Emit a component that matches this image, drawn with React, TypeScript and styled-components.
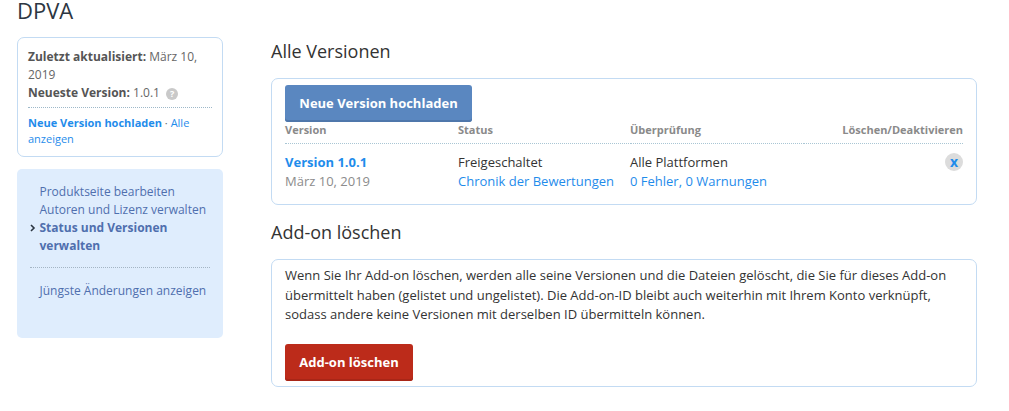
import React from "react";
import styled, { createGlobalStyle } from "styled-components";

const Global = createGlobalStyle`
  html, body { margin: 0; padding: 0; background: #fff; }
  body { font-family: "Open Sans", "Liberation Sans", sans-serif; font-size: 13px; line-height: 18px; color: #333; }
  a { text-decoration: none; color: #1f8ceb; }
`;
const Page = styled.div`
  padding: 0 17px;
  width: 960px;
  box-sizing: content-box;
`;
const Title = styled.h1`
  margin: 0;
  height: 37px;
  font-size: 22px;
  line-height: 21px;
  font-weight: 400;
  color: #2c3642;
`;
const Columns = styled.div`
  display: flex;
  gap: 48px;
  align-items: flex-start;
`;
const Side = styled.aside`
  width: 206px;
  flex: none;
  display: flex;
  flex-direction: column;
  gap: 12px;
`;
const InfoCard = styled.div`
  box-sizing: border-box;
  height: 120px;
  border: 1px solid #c3dbf3;
  border-radius: 7px;
  padding: 10px 10px 0;
  font-size: 12px;
  color: #666;
`;
const Strong = styled.b`
  font-weight: 700;
  color: #555;
`;
const HelpDot = styled.span`
  display: inline-flex;
  align-items: center;
  justify-content: center;
  width: 12px;
  height: 12px;
  margin-left: 3px;
  border-radius: 50%;
  background: #c9c9c9;
  color: #fff;
  font-size: 9px;
  font-weight: 700;
  line-height: 12px;
  vertical-align: 0;
`;
const InfoLinks = styled.div`
  margin-top: 5px;
  padding-top: 7px;
  width: 184px;
  border-top: 1px dotted #9db8c9;
  font-size: 11px;
  line-height: 16px;
`;
const Nav = styled.nav`
  box-sizing: border-box;
  height: 169px;
  background: #dfedfd;
  border-radius: 5px;
  padding: 14px 13px 0 22.5px;
`;
const NavItem = styled.a<{ $active?: boolean }>`
  display: block;
  position: relative;
  font-size: 12px;
  line-height: 18px;
  color: #4f6fae;
  font-weight: ${(p) => (p.$active ? 700 : 400)};
`;
const Chevron = styled.svg`
  position: absolute;
  left: -10px;
  top: 5px;
`;
const NavRule = styled.div`
  margin: 12px 0 14px -10px;
  width: 180px;
  border-top: 1px dotted #a4b5c4;
`;
const Main = styled.main`
  width: 706px;
  flex: none;
`;
const Heading = styled.h2<{ $top: number }>`
  margin: ${(p) => p.$top}px 0 0;
  height: 39px;
  font-size: 18px;
  line-height: 25px;
  font-weight: 400;
  color: #333;
`;
const Card = styled.section<{ $h: number }>`
  box-sizing: border-box;
  height: ${(p) => p.$h}px;
  border: 1px solid #c3dbf3;
  border-radius: 7px;
  padding: 6px 13px 0;
`;
const Button = styled.a<{ $bg: string; $shade: string; $w: number }>`
  display: block;
  box-sizing: border-box;
  width: ${(p) => p.$w}px;
  height: 37px;
  background: ${(p) => p.$bg};
  box-shadow: inset 0 -2px 0 ${(p) => p.$shade};
  border-radius: 3px;
  color: #fff;
  font-size: 13px;
  font-weight: 700;
  line-height: 37px;
  text-align: center;
`;
const Grid = styled.div`
  display: grid;
  grid-template-columns: 173px 172px 173px 1fr;
`;
const Th = styled.div<{ $right?: boolean }>`
  height: 21px;
  margin-right: ${(p) => (p.$right ? 0 : 1)}px;
  border-bottom: 1px dotted #a9c6d4;
  font-size: 11px;
  font-weight: 700;
  line-height: 16px;
  color: #8a8a8a;
  text-align: ${(p) => (p.$right ? "right" : "left")};
`;
const Td = styled.div<{ $right?: boolean }>`
  padding-top: 9px;
  font-size: 13px;
  line-height: 19px;
  color: #333;
  display: flex;
  flex-direction: column;
  align-items: ${(p) => (p.$right ? "flex-end" : "flex-start")};
`;
const VersionLink = styled.a`
  font-size: 13px;
  font-weight: 700;
`;
const Muted = styled.span`
  color: #8c8c8c;
`;
const CloseBtn = styled.a`
  width: 18px;
  height: 18px;
  border-radius: 50%;
  background: #dcdcdc;
  font-size: 14px;
  font-weight: 700;
  line-height: 17px;
  text-align: center;
`;
const Body = styled.p`
  margin: 0 0 19px;
  font-size: 13px;
  line-height: 19.5px;
  color: #333;
  white-space: nowrap;
`;

export default function App() {
  return (
    <>
      <Global />
      <Page>
        <Title>DPVA</Title>
        <Columns>
          <Side>
            <InfoCard>
              <Strong>Zuletzt aktualisiert:</Strong> März 10, 2019
              <br />
              <Strong>Neueste Version:</Strong> 1.0.1 <HelpDot>?</HelpDot>
              <InfoLinks>
                <a href="#"><b>Neue Version hochladen</b></a> · <a href="#">Alle anzeigen</a>
              </InfoLinks>
            </InfoCard>
            <Nav>
              <NavItem href="#">Produktseite bearbeiten</NavItem>
              <NavItem href="#">Autoren und Lizenz verwalten</NavItem>
              <NavItem href="#" $active>
                <Chevron width="6" height="8" viewBox="0 0 6 8">
                  <path d="M1 1l3 3-3 3" fill="none" stroke="#2c3642" strokeWidth="1.6" />
                </Chevron>
                Status und Versionen verwalten
              </NavItem>
              <NavRule />
              <NavItem href="#">Jüngste Änderungen anzeigen</NavItem>
            </Nav>
          </Side>
          <Main>
            <Heading $top={2}>Alle Versionen</Heading>
            <Card $h={127}>
              <Button href="#" $w={187} $bg="#5a87c0" $shade="#4f77ab">Neue Version hochladen</Button>
              <Grid>
                <Th>Version</Th>
                <Th>Status</Th>
                <Th>Überprüfung</Th>
                <Th $right>Löschen/Deaktivieren</Th>
                <Td>
                  <VersionLink href="#">Version 1.0.1</VersionLink>
                  <Muted>März 10, 2019</Muted>
                </Td>
                <Td>
                  <span>Freigeschaltet</span>
                  <a href="#">Chronik der Bewertungen</a>
                </Td>
                <Td>
                  <span>Alle Plattformen</span>
                  <a href="#">0 Fehler, 0 Warnungen</a>
                </Td>
                <Td $right>
                  <CloseBtn href="#">x</CloseBtn>
                </Td>
              </Grid>
            </Card>
            <Heading $top={15}>Add-on löschen</Heading>
            <Card $h={128}>
              <Body>
                Wenn Sie Ihr Add-on löschen, werden alle seine Versionen und die Dateien gelöscht, die Sie für dieses Add-on
                <br />
                übermittelt haben (gelistet und ungelistet). Die Add-on-ID bleibt auch weiterhin mit Ihrem Konto verknüpft,
                <br />
                sodass andere keine Versionen mit derselben ID übermitteln können.
              </Body>
              <Button href="#" $w={128} $bg="#bc2b1a" $shade="#a82617">Add-on löschen</Button>
            </Card>
          </Main>
        </Columns>
      </Page>
    </>
  );
}
